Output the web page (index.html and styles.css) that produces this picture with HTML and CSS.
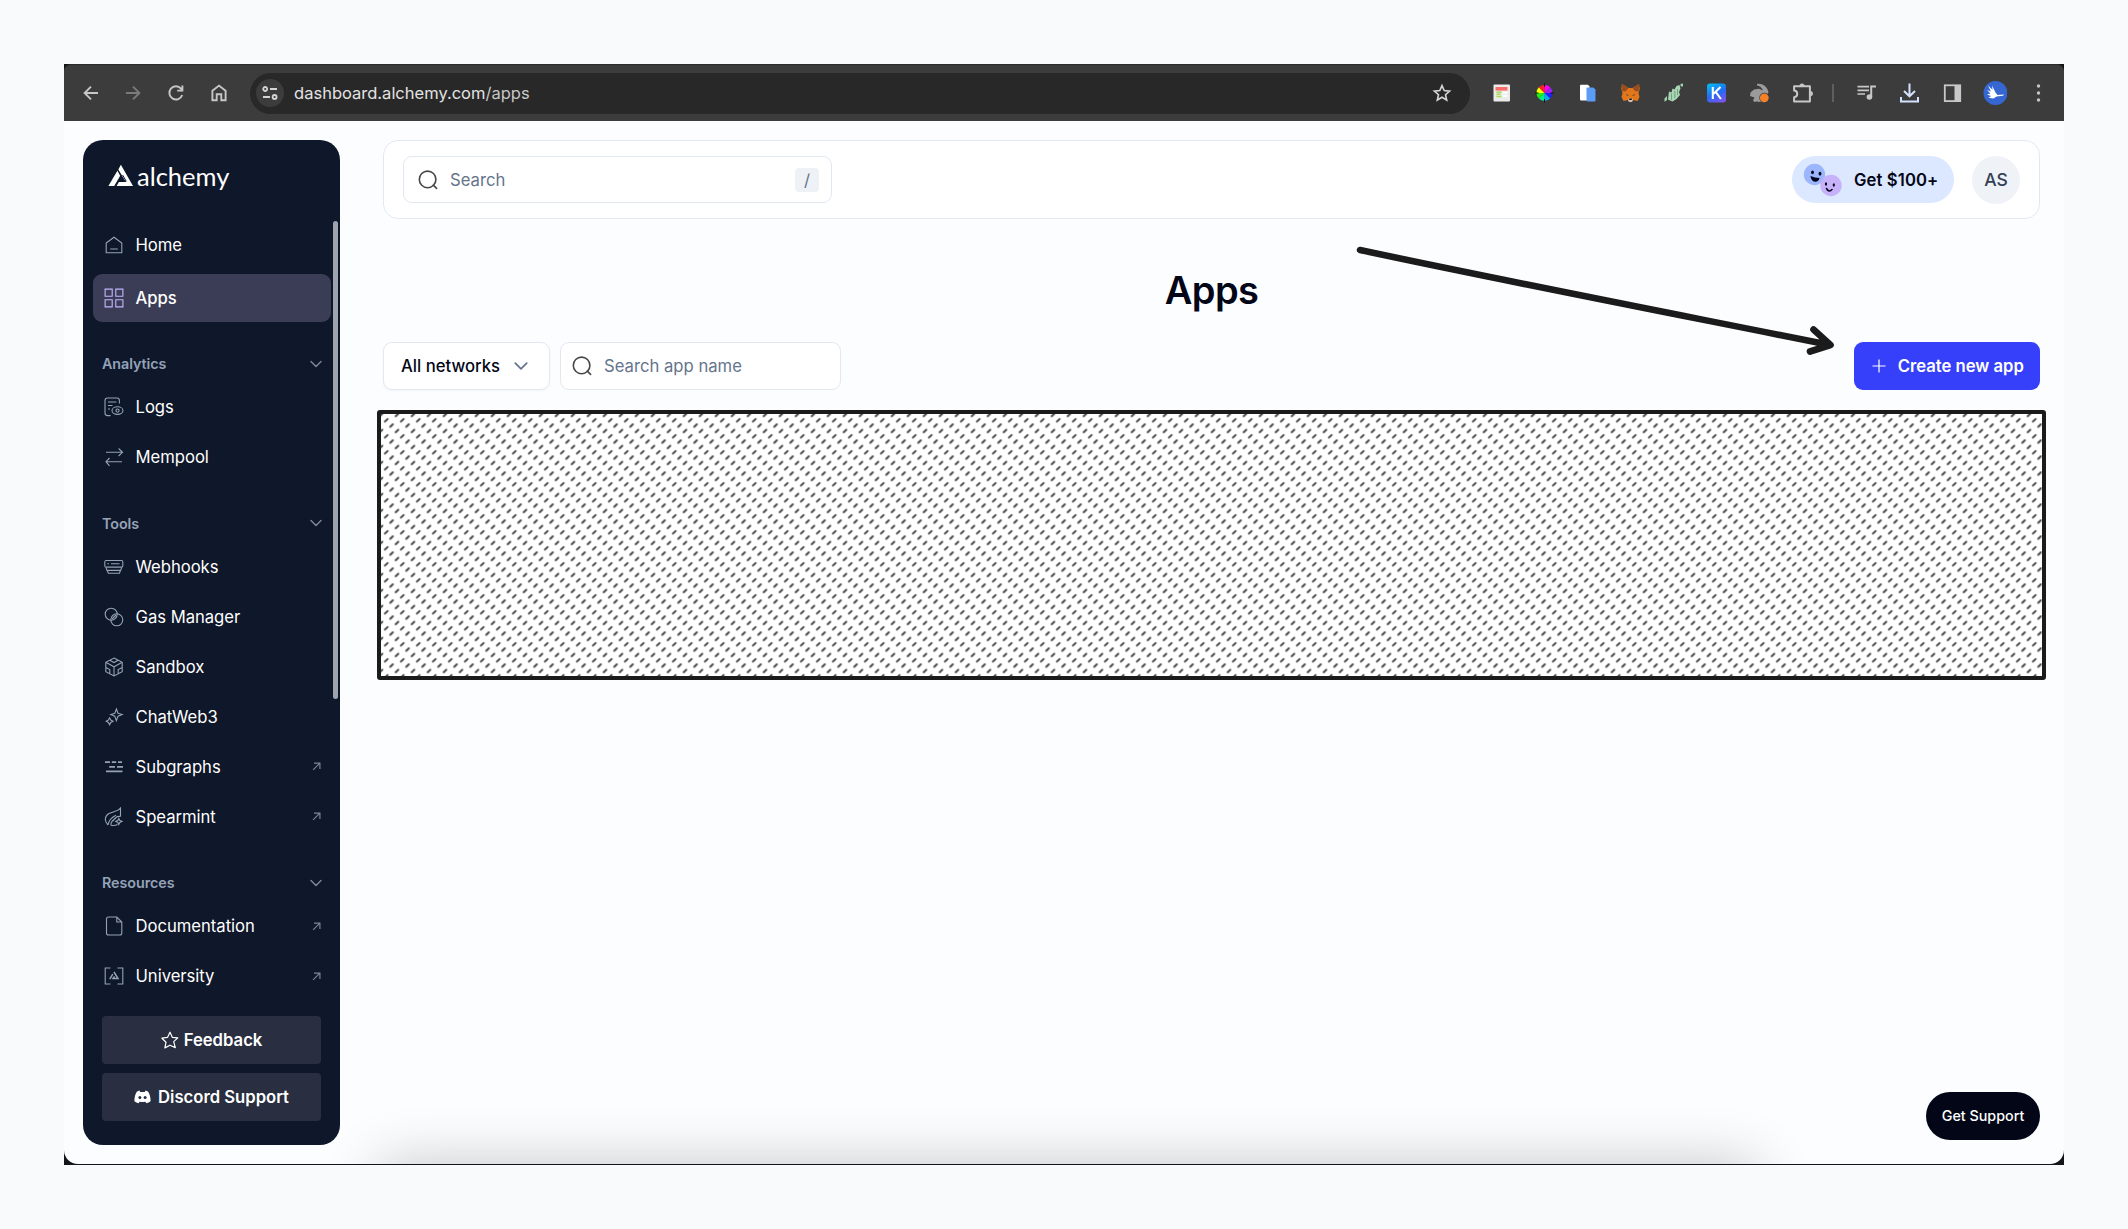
FILE: index.html
```html
<!DOCTYPE html>
<html lang="en">
<head>
<meta charset="utf-8">
<title>Apps</title>
<link rel="stylesheet" href="styles.css">
</head>
<body>
<svg class="defs" width="0" height="0">
  <symbol id="chev" viewBox="0 0 14 14"><path d="M2 4.5 7 9.5 12 4.5" fill="none" stroke="currentColor" stroke-width="1.5" stroke-linecap="round" stroke-linejoin="round"/></symbol>
  <symbol id="ext" viewBox="0 0 10 10"><path d="M1.2 8.8 8.5 1.5M2.2 1.2H8.8V7.8" fill="none" stroke="currentColor" stroke-width="1.3"/></symbol>
  <symbol id="mag" viewBox="0 0 20 20"><g fill="none" stroke="#484848" stroke-width="1.6" stroke-linecap="round"><circle cx="9.6" cy="9.4" r="8.3"/><path d="M15.3 15.1 18.6 18.4"/></g></symbol>
</svg>
<div class="window">
  <div class="toolbar">
    <div class="nav">
      <svg width="20" height="20" viewBox="0 0 20 20"><path d="M17 10H4M10 3.6 3.6 10 10 16.4" stroke="#c7c7c7" stroke-width="1.9"/></svg>
      <svg width="20" height="20" viewBox="0 0 20 20"><path d="M3 10H16M10 3.6 16.4 10 10 16.4" stroke="#7b7b7b" stroke-width="1.9"/></svg>
      <svg width="20" height="20" viewBox="0 0 20 20"><path d="M16.2 12A6.6 6.6 0 1 1 15 5.6L16 6.8M16.4 2.6V7.6H11.2" stroke="#c7c7c7" stroke-width="1.9"/></svg>
      <svg width="20" height="20" viewBox="0 0 20 20"><path d="M3.4 17.3V7.8L10 2.6 16.6 7.8V17.3H12.3V11.3H7.7V17.3Z" stroke="#c7c7c7" stroke-width="1.9"/></svg>
    </div>
    <div class="omnibox">
      <span class="site"><svg width="18" height="18" viewBox="0 0 18 18" fill="none" stroke="#d5d5d5" stroke-width="1.8"><circle cx="4.2" cy="5" r="2"/><path d="M9 5H16M2 13H9"/><circle cx="13.6" cy="13" r="2"/></svg></span>
      <span class="url">dashboard.alchemy.com<i>/apps</i></span>
      <svg width="20" height="20" viewBox="0 0 20 20"><path d="M10 2.6 12.2 7.6 17.6 8.1 13.5 11.7 14.7 17 10 14.2 5.3 17 6.5 11.7 2.4 8.1 7.8 7.6Z" fill="none" stroke="#d5d5d5" stroke-width="1.6"/></svg>
    </div>
    <div class="exts">
      <svg width="20" height="20" viewBox="0 0 20 20"><rect x="2" y="1.5" width="16.5" height="17" rx="1" fill="#ebebeb"/><rect x="4" y="4" width="12" height="3.6" fill="#fa6b6b"/><path d="M5 9.3H10M5 11.3H9M5 13.5H10" stroke="#a8dc55" stroke-width="1.5"/><path d="M11 9.7H16M11 13H16" stroke="#fff" stroke-width="2"/></svg>
      <svg width="20" height="20" viewBox="0 0 20 20"><path d="M10 10V2A8 8 0 0 1 15.6 4.3Z" fill="#f0f"/><path d="M10 10 15.6 4.3A8 8 0 0 1 18 10Z" fill="#a020f0"/><path d="M10 10H18A8 8 0 0 1 15.6 15.6Z" fill="#2020ff"/><path d="M10 10 15.6 15.6A8 8 0 0 1 10 18Z" fill="#0af"/><path d="M10 10V18A8 8 0 0 1 4.3 15.6Z" fill="#0e8"/><path d="M10 10 4.3 15.6A8 8 0 0 1 2 10Z" fill="#2e1"/><path d="M10 10H2A8 8 0 0 1 4.3 4.3Z" fill="#ef0"/><path d="M10 10 4.3 4.3A8 8 0 0 1 10 2Z" fill="#f22"/><path d="M10 .6V4M10 16V19.4M.6 10H4M16 10H19.4" stroke="#111" stroke-width="1"/></svg>
      <svg width="20" height="20" viewBox="0 0 20 20"><path d="M3.5 1.8H10.5L12 3.5V17.5H3.5Q2.5 17.5 2.5 16.5V2.8Q2.5 1.8 3.5 1.8Z" fill="#fff"/><path d="M10 4.5H15.8L18 6.5V17.5Q18 18.5 17 18.5H10Q9 18.5 9 17.5V5.5Q9 4.5 10 4.5Z" fill="#5a9cf6"/></svg>
      <svg width="20" height="20" viewBox="0 0 20 20"><path d="M1.5 1 8 5H12L18.5 1 19.2 6 18 10 19 14 17 18 12.5 17 11 19H9L7.5 17 3 18 1 14 2 10 .8 6Z" fill="#e2761b"/><path d="M1.5 1 8 5 5 8.5 1.6 8ZM18.5 1 12 5 15 8.5 18.4 8Z" fill="#9a4d1c"/><path d="M5.5 11 8.5 12.5H6.5ZM14.5 11 11.5 12.5H13.5Z" fill="#233447"/><path d="M8 15.5H12L12.3 18 11 19H9L7.7 18Z" fill="#d7c1b3"/><path d="M8.7 15.5H11.3V17H8.7Z" fill="#161616"/></svg>
      <svg width="20" height="20" viewBox="0 0 20 20"><path d="M1 18.8V15.5L3.5 13V17ZM4.5 16.5 5.5 8.5 8 9.5 9 5.5 11 6.5 13 3 16 2 17 5.5 15.5 9 16.5 12 13 16 9 18.5 6.5 17.5Z" fill="#a6d8b4"/><circle cx="18.4" cy="2" r="1.5" fill="#a6d8b4"/><path d="M8 17V10.5M11.3 15V8M14 12V6" stroke="#4f6356" stroke-width=".5"/></svg>
      <svg width="20" height="20" viewBox="0 0 20 20"><defs><linearGradient id="kg" x1=".2" y1="0" x2=".7" y2="1"><stop offset="0" stop-color="#04b9f2"/><stop offset=".55" stop-color="#246af2"/><stop offset="1" stop-color="#7a55ee"/></linearGradient></defs><rect x=".5" y=".5" width="19" height="19" rx="3" fill="url(#kg)"/><path d="M6.3 4V16M14 4 7.2 10.8M9.3 9 14.4 16" stroke="#fff" stroke-width="2.1" fill="none"/></svg>
      <svg width="20" height="20" viewBox="0 0 20 20"><path d="M7.5 1C12 0 18 3 19 9.5L17 12 13 18 11 19 7 18.5 5 19 3.5 17.5 5 14.5 .5 13 1 9.5 4.5 6.5 9.5 5.8 13.5 7.5C12.5 4.5 10 3 7.5 2.5Z" fill="#9b9b9b"/><circle cx="14.8" cy="14.8" r="5" fill="#3c3c3c"/><circle cx="14.8" cy="14.8" r="4.4" fill="#f4812a"/></svg>
      <svg width="22" height="22" viewBox="0 0 22 22"><path d="M2.6 4.2H18.4V19.4H2.6V15.2C6.8 15 6.8 8.6 2.6 8.4Z" fill="none" stroke="#c7c7c7" stroke-width="2" stroke-linejoin="round"/><path d="M8 4A2.5 2.5 0 0 1 13 4ZM18.8 9A2.6 2.6 0 0 1 18.8 14.2Z" fill="#c7c7c7"/></svg>
    </div>
    <span class="sep"></span>
    <div class="exts">
      <svg width="20" height="20" viewBox="0 0 20 20"><path d="M1 3.6H12.5M1 7.3H12.5M1 11H8.5" stroke="#c7c7c7" stroke-width="1.7"/><path d="M14.7 14V3.5H19.5" fill="none" stroke="#c7c7c7" stroke-width="2"/><circle cx="12.9" cy="14" r="2.8" fill="#c7c7c7"/></svg>
      <svg width="20" height="20" viewBox="0 0 20 20"><path d="M10 .4V13M4.5 8 10 13.3 15.5 8M1.5 14V18.5H18.5V14" fill="none" stroke="#d3e3fd" stroke-width="2"/></svg>
      <svg width="20" height="20" viewBox="0 0 20 20"><rect x="2.3" y="2.3" width="15.4" height="15.8" fill="none" stroke="#c7c7c7" stroke-width="1.8"/><path d="M12 2H18V18H12Z" fill="#c7c7c7"/></svg>
      <svg width="24" height="24" viewBox="0 0 24 24"><circle cx="12" cy="12" r="12" fill="#3566d1"/><path d="M4.5 4.500 9 8.800 8.500 4.500 12 11.500 14 14 20.500 13.400 19.500 14.800 13 15.500 10 17.500 5 16.800 7.500 15 3.500 13.500 7 12.500 3.500 9 7.500 10.500Z" fill="#fff"/></svg>
      <svg width="20" height="20" viewBox="0 0 20 20"><g fill="#c7c7c7"><circle cx="10" cy="3" r="1.7"/><circle cx="10" cy="10" r="1.7"/><circle cx="10" cy="17" r="1.7"/></g></svg>
    </div>
  </div>
  <div class="page">
    <aside class="sidebar">
      <div class="logo">
        <svg width="26" height="23" viewBox="0 0 26 23"><path d="M10.300 5.400 12.900.8 25 22H8.600L10.900 18H17.900Z" fill="#fff"/><path d="M9.400 6.800 12.200 11.700 6.200 22H.4Z" fill="#fff"/><path d="M10.400 17.200H18.200L14.600 11" fill="none" stroke="#0f172a" stroke-width="1"/></svg>
        <span>alchemy</span>
      </div>
      <div class="menu">
        <a class="item"><svg viewBox="0 0 20 20"><path d="M2.2 8 10 2.2 17.8 8V17.8H2.2ZM6.2 14H13.8"/></svg><b>Home</b></a>
        <a class="item active"><svg viewBox="0 0 20 20"><path d="M1.1 1.1H8.2V8.2H1.1ZM11.8 1.1H18.9V8.2H11.8ZM1.1 11.8H8.2V18.9H1.1ZM11.8 11.8H18.9V18.9H11.8Z"/></svg><b>Apps</b></a>
        <h4>Analytics<svg><use href="#chev"/></svg></h4>
        <a class="item"><svg viewBox="0 0 20 20"><path d="M15.4 6.5V3.5Q15.4 1 13 1H3.6Q1 1 1 3.6V16Q1 18.6 3.6 18.6H6.5M4 5H12.4M4 8.5H8.5M4 12H6"/><ellipse cx="13.5" cy="13.6" rx="5.5" ry="3.8"/><circle cx="13.5" cy="13.6" r="1.6"/></svg><b>Logs</b></a>
        <a class="item"><svg viewBox="0 0 20 20"><path d="M2 5.300H18.2M14.600 1.500 18.5 5.300 14.600 9M18 14.700H2M5.500 11 2 14.700 5.500 18.800"/></svg><b>Mempool</b></a>
        <h4>Tools<svg><use href="#chev"/></svg></h4>
        <a class="item"><svg viewBox="0 0 20 20"><rect x=".8" y="3.5" width="18" height="6.6" rx="1.4"/><path d="M3.4 6.8H5M7 6.8H15.5M2 10.4 3 13.4H16.6L17.8 10.4M3.2 13.5 4.4 16.3H15.4L16.5 13.5"/></svg><b>Webhooks</b></a>
        <a class="item"><svg viewBox="0 0 20 20"><circle cx="7.2" cy="7.2" r="6"/><circle cx="12.8" cy="12.8" r="6"/><path d="M8 12 12 8"/></svg><b>Gas Manager</b></a>
        <a class="item"><svg viewBox="0 0 20 20"><path d="M10 1 18.2 5.3V14.7L10 19 1.8 14.7V5.3ZM1.8 5.3 10 9.8 18.2 5.3M10 9.8V19M5.8 3.2 10 5.600 14.200 3.200M1.800 10.500 5.800 12.500V16.800M18.200 10.500 14.200 12.500V16.800"/></svg><b>Sandbox</b></a>
        <a class="item"><svg viewBox="0 0 20 20"><path d="M12.4 2 14 6.2 18.2 7.6 14 9.2 12.4 13.6 10.8 9.2 6.8 7.6 10.8 6.2ZM5.6 10.8 6.8 13 9 14.2 6.8 15.4 5.6 17.8 4.4 15.4 2.2 14.2 4.4 13Z"/></svg><b>ChatWeb3</b></a>
        <a class="item"><svg viewBox="0 0 20 20"><path d="M1 5.2H6M7.8 5.2H12.2M14 5.2H18M5.2 9.8H11M13 9.8H19M2 14.4H18.5" stroke-width="1.8"/></svg><b>Subgraphs</b><svg class="out"><use href="#ext"/></svg></a>
        <a class="item"><svg viewBox="0 0 20 20"><path d="M4 18C0 14 .5 9 5 6.5 9.5 4.2 14 4.5 16.5 1V9.5M4 18C5 13 8 10 12 8.2M16.5 9.5C14 9 11 10.5 9 14M7 18.3C6.5 15 9.5 12.5 12 11M7 18.3C9.5 18.8 12 18.3 13.5 17.5M14.8 11.5 15.8 13.5 18 14.4 15.8 15.4 14.8 17.5 13.8 15.4 11.8 14.4 13.8 13.5Z"/></svg><b>Spearmint</b><svg class="out"><use href="#ext"/></svg></a>
        <h4>Resources<svg><use href="#chev"/></svg></h4>
        <a class="item"><svg viewBox="0 0 20 20"><path d="M4.5 1H12.8L17.8 6V17Q17.8 19 15.8 19H4.5Q2.5 19 2.5 17V3Q2.5 1 4.5 1ZM12.8 1V6H17.8"/></svg><b>Documentation</b><svg class="out"><use href="#ext"/></svg></a>
        <a class="item"><svg viewBox="0 0 20 20"><path d="M6.5 2H1.2V18H6.5M13.5 2H18.8V18H13.5"/><path d="M10 6 14 12.6H9L10.5 10.5M8.8 8 5.8 13.2" stroke-width="1.500"/></svg><b>University</b><svg class="out"><use href="#ext"/></svg></a>
        <span class="scroll"></span>
      </div>
      <div class="foot">
        <button><svg width="18" height="18" viewBox="0 0 18 18"><path d="M9 1.2 11.3 6.3 16.8 6.9 12.7 10.6 14.3 16.6 9 14.2 3.9 16.9 5 11.2.9 7.2 6.6 6.3Z" fill="none" stroke="#fff" stroke-width="1.2" stroke-linejoin="round"/></svg>Feedback</button>
        <button class="discord"><svg width="17" height="14" viewBox="0 0 17 14"><path d="M5.5.6 3 1.4C1.2 4 .3 7.2.4 11.2 1.6 12.3 3 13 4.6 13.3L5.6 11.7Q8.500 12.500 11.400 11.700L12.400 13.300C14 13 15.400 12.300 16.600 11.200 16.700 7.200 15.800 4 14 1.400L11.500.6 10.800 1.900H6.200Z" fill="#fff"/><circle cx="5.900" cy="7.600" r="1.500" fill="#292e40"/><circle cx="11.100" cy="7.600" r="1.500" fill="#292e40"/></svg>Discord Support</button>
      </div>
    </aside>
    <main>
      <header class="card">
        <div class="search"><svg width="20" height="20"><use href="#mag"/></svg><span>Search</span><kbd>/</kbd></div>
        <div class="user">
          <div class="promo">
            <svg width="40" height="34" viewBox="0 0 40 34"><circle cx="12.500" cy="11.500" r="10.700" fill="#9bb6fc"/><circle cx="29" cy="22.500" r="10.700" fill="#c7b2fa"/><g fill="#05051e"><ellipse cx="10.500" cy="9.300" rx="1.400" ry="1.900"/><ellipse cx="18" cy="10.700" rx="1.400" ry="1.900"/><path d="M8.500 13Q13 15 17.500 15 16.500 19.200 13 18.800 9 18 8.500 13Z"/><ellipse cx="24" cy="21" rx="1.100" ry="1.700"/><ellipse cx="31.800" cy="22" rx="1.100" ry="1.700"/></g><path d="M24.500 25.500Q27 29.800 30 26.500" fill="none" stroke="#05051e" stroke-width="1.600" stroke-linecap="round"/></svg>
            <span>Get $100+</span>
          </div>
          <div class="avatar">AS</div>
        </div>
      </header>
      <h1>Apps</h1>
      <div class="filters">
        <div class="select">All networks<svg width="16" height="16"><use href="#chev"/></svg></div>
        <div class="search name"><svg width="20" height="20"><use href="#mag"/></svg><span>Search app name</span></div>
        <button class="create"><svg width="14" height="14" viewBox="0 0 14 14"><path d="M7 .5V13.500M.5 7H13.500" stroke="#fff" stroke-width="1.200"/></svg>Create new app</button>
      </div>
      <svg class="hatch" viewBox="0 0 1669 270">
        <defs><pattern id="dash" width="16" height="16" patternUnits="userSpaceOnUse" x="9.300" y="10.300"><path d="M-1.300 1.200 1.300-1.200M4 6.500 6.600 4.100M9.400 11.900 12 9.500M14.700 17.200 17.300 14.800M-1.300 17.200 1.300 14.800M14.700 1.200 17.300-1.200" stroke="#474747" stroke-width="2" stroke-linecap="round"/></pattern></defs>
        <rect x="2" y="2" width="1665" height="266" rx="1" fill="#fff"/>
        <rect x="2" y="2" width="1665" height="266" rx="1" fill="url(#dash)" stroke="#1b1b1b" stroke-width="4"/>
      </svg>
    </main>
    <svg class="arrow" width="490" height="120" viewBox="0 0 490 120"><path d="M10 10C150 40 320 73 480 105M463.500 89.500 480.500 105 460 111.500" fill="none" stroke="#1b1b1b" stroke-width="6.600" stroke-linecap="round" stroke-linejoin="round"/></svg>
    <div class="shade"></div>
    <button class="support">Get Support</button>
  </div>
</div>
</body>
</html>
```
FILE: styles.css
```css
* { box-sizing: border-box; }
body { margin: 0; padding: 64px; height: 1229px; background: #f9fafc; font-family: Inter, "Liberation Sans", sans-serif; font-size: 16.67px; color: #020617; overflow: hidden; }
button { border: 0; font: inherit; color: #fff; padding: 0; }
.defs { position: absolute; }
.window { width: 2000px; height: 1101px; background: #131418; display: flex; flex-direction: column; }
.toolbar { height: 57px; flex: none; background: #3c3c3c; border-top: 1px solid #2b2b2b; border-radius: 7px 7px 0 0; display: flex; align-items: center; padding-left: 16.500px; }
.nav { display: flex; gap: 22.700px; }
.nav path { fill: none; }
.omnibox { margin-left: 21.500px; width: 1220px; height: 41px; border-radius: 21px; background: #282828; display: flex; align-items: center; padding: 0 18px 0 6px; }
.site { width: 28px; height: 28px; border-radius: 50%; background: #3c3c3c; display: flex; align-items: center; justify-content: center; margin-right: 10px; }
.url { flex: 1; color: #e3e3e3; font-size: 16.500px; letter-spacing: 0; }
.url i { font-style: normal; color: #c7c7c7; }
.exts { display: flex; align-items: center; margin-left: 9.500px; }
.exts svg { box-sizing: content-box; width: 20px; padding: 0 11.500px; flex: none; }
.exts svg[width="22"] { width: 22px; padding: 0 10.500px; }
.exts svg[width="24"] { width: 24px; padding: 0 9.500px; }
.sep { width: 2px; height: 18px; background: #5f5f5f; margin-left: 8.500px; }
.sep + .exts { margin-left: 10.500px; }
.page { position: relative; height: 1043px; background: #fcfdff; border-radius: 0 0 14px 14px; overflow: hidden; display: flex; padding: 19px 24px 0 19px; gap: 43px; }
.sidebar { width: 257px; height: 1005px; flex: none; background: #0f172a; border-radius: 20px; display: flex; flex-direction: column; position: relative; z-index: 1; }
.logo { height: 80px; padding: 24px 0 0 24.500px; display: flex; gap: 3.500px; color: #fff; font: 25.500px/25px Lato, sans-serif; }
.logo span { letter-spacing: 0; }
.menu { height: 781px; position: relative; padding: 0 9px 0 10px; }
.item { display: flex; align-items: center; height: 50px; padding: 0 10px 0 11px; color: #fff; }
.item > svg { width: 20px; height: 20px; fill: none; stroke: #94a3b8; stroke-width: 1.100; margin-right: 11.500px; }
.item b { font-weight: 400; flex: 1; letter-spacing: -.03px; }
.item .out { width: 9px; height: 9px; margin: 0; color: #7a8799; stroke: none; }
.item.active { background: #3b3d56; border-radius: 9px; height: 48px; margin: 4px 0 24px; }
.item.active b { font-weight: 500; }
.item.active > svg { stroke: #c4b5fd; }
h4 { margin: 23.500px 8px 0 9px; height: 36px; padding-bottom: 1px; display: flex; align-items: center; justify-content: space-between; font-size: 14.300px; font-weight: 600; color: #94a3b8; letter-spacing: -.05px; }
.active + h4 { margin-top: 0; }
h4 svg { width: 14px; height: 14px; color: #7a8799; }
.scroll { position: absolute; right: 2px; top: 1px; width: 5px; height: 478px; border-radius: 3px; background: #9fa3ad; }
.foot { padding: 15px 19px 0; display: flex; flex-direction: column; gap: 9px; }
.foot button { height: 48px; border-radius: 4px; background: #292e40; font-weight: 600; display: flex; align-items: center; justify-content: center; gap: 5px; }
.foot .discord { gap: 7px; }
main { flex: 1; display: flex; flex-direction: column; }
.card { height: 79px; background: #fff; border: 1px solid #e2e8f0; border-radius: 15px; padding: 0 19px; display: flex; align-items: center; justify-content: space-between; }
.search { width: 429px; height: 47px; border: 1px solid #e2e8f0; border-radius: 9px; background: #fff; display: flex; align-items: center; padding: 0 12px 0 14px; color: #64748b; }
.search svg { margin-right: 12px; }
.search span { flex: 1; }
kbd { width: 24px; height: 24px; border-radius: 4px; background: #eef2f7; display: flex; align-items: center; justify-content: center; font: inherit; }
.user { display: flex; align-items: center; gap: 18px; }
.promo { width: 162px; height: 47px; border-radius: 24px; background: #dce8ff; display: flex; align-items: center; padding-left: 10px; font-weight: 600; }
.promo span { margin-left: 12px; white-space: nowrap; letter-spacing: .1px; }
.avatar { width: 48px; height: 48px; border-radius: 50%; background: #eff3f8; color: #334155; display: flex; align-items: center; justify-content: center; font-weight: 500; font-size: 17.500px; }
h1 { margin: 47px 0 0; height: 48px; line-height: 48px; text-align: center; font-size: 38px; font-weight: 600; letter-spacing: -.6px; }
.filters { margin-top: 28px; height: 48px; display: flex; }
.select { width: 167px; border: 1px solid #e2e8f0; border-radius: 9px; background: #fff; display: flex; align-items: center; padding-left: 17px; gap: 13px; font-weight: 500; box-shadow: 0 1px 2px rgba(15, 23, 42, .04); }
.select svg { color: #64748b; }
.name { width: 281px; height: 48px; margin-left: 10px; padding-left: 11px; }
.create { margin-left: auto; width: 186px; background: #363ff9; border-radius: 9px; font-weight: 600; display: flex; align-items: center; justify-content: center; gap: 12px; padding-left: 1.500px; }
.hatch { width: 1669px; height: 270px; margin: 20px -6px 0 -6px; flex: none; }
.arrow { position: absolute; left: 1286px; top: 119px; }
.shade { position: absolute; left: 316px; top: 1045px; width: 1376px; height: 60px; box-shadow: 0 0 58px rgba(0, 0, 0, .24); }
.support { position: absolute; left: 1862px; top: 971px; width: 114px; height: 48px; border-radius: 24px; background: #020617; font-size: 14.300px; font-weight: 500; padding-bottom: 1px; }
```
